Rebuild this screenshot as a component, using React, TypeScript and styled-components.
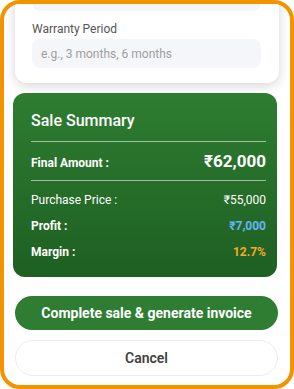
import React, { useLayoutEffect, useRef } from "react";
import styled, { createGlobalStyle } from "styled-components";

const GlobalStyle = createGlobalStyle`
  html, body {
    margin: 0;
    padding: 0;
    background: #fff;
  }
  * {
    box-sizing: border-box;
  }
`;

const Frame = styled.div`
  width: 294px;
  height: 389px;
  border: 4px solid #f29400;
  border-radius: 20px;
  overflow: hidden;
  background: #fff;
  display: flex;
  flex-direction: column;
  font-family: Roboto, "Noto Sans", "DejaVu Sans", sans-serif;
`;

const ScrollBody = styled.div`
  flex: 1;
  min-height: 0;
  overflow-y: auto;
  scrollbar-width: none;
  display: flex;
  flex-direction: column;
  gap: 10px;
  padding-top: 16px;

  &::-webkit-scrollbar {
    display: none;
  }
`;

const FormCard = styled.div`
  margin: 0 11px;
  background: #fff;
  border-radius: 12px;
  padding: 16px 18px 15px 17px;
  box-shadow: 0 3px 12px rgba(0, 0, 0, 0.16);
  display: flex;
  flex-direction: column;
  gap: 10px;
`;

const Field = styled.div`
  display: flex;
  flex-direction: column;
  gap: 2px;
`;

const Label = styled.label`
  font-size: 12px;
  line-height: 16px;
  color: #555;
`;

const Input = styled.input`
  height: 29px;
  border: none;
  outline: none;
  border-radius: 8px;
  background: #f5f6fa;
  padding: 0 9px;
  font-family: inherit;
  font-size: 12px;
  color: #333;

  &::placeholder {
    color: #9e9e9e;
  }
`;

const SummaryCard = styled.div`
  margin: 0 13px 0 9px;
  border-radius: 12px;
  background: linear-gradient(180deg, #2e7d32 0%, #1e5f22 100%);
  padding: 18px 11px 17px 18px;
  color: #fff;
  flex-shrink: 0;
`;

const SummaryTitle = styled.div`
  font-size: 16px;
  line-height: 20px;
  font-weight: 500;
  margin-bottom: 10px;
`;

const Divider = styled.div`
  height: 1px;
  background: rgba(255, 255, 255, 0.55);
`;

const TotalRow = styled.div`
  display: flex;
  justify-content: space-between;
  align-items: baseline;
  padding: 8px 0;
  height: 38px;
`;

const TotalLabel = styled.span`
  font-size: 12px;
  font-weight: 700;
`;

const TotalValue = styled.span`
  font-size: 17px;
  line-height: 22px;
  font-weight: 700;
`;

const Rows = styled.div`
  display: flex;
  flex-direction: column;
  gap: 10px;
  padding-top: 11px;
`;

const Row = styled.div<{ $bold?: boolean }>`
  display: flex;
  justify-content: space-between;
  font-size: 12px;
  line-height: 16px;
  font-weight: ${({ $bold }) => ($bold ? 700 : 400)};
`;

const Value = styled.span<{ $color?: string }>`
  color: ${({ $color }) => $color || "#fff"};
`;

const Footer = styled.div`
  flex-shrink: 0;
  display: flex;
  flex-direction: column;
  gap: 10px;
  padding: 19px 12px 9px 11px;
`;

const PrimaryButton = styled.button`
  height: 34px;
  border: none;
  border-radius: 17px;
  background: #2e7d32;
  color: #fff;
  font-family: inherit;
  font-size: 14px;
  font-weight: 700;
  cursor: pointer;
`;

const GhostButton = styled.button`
  height: 36px;
  border: 1px solid #ececec;
  border-radius: 18px;
  background: #fff;
  color: #424242;
  font-family: inherit;
  font-size: 14px;
  font-weight: 600;
  cursor: pointer;
`;

const fields = [
  { label: "Customer Name", placeholder: "Enter customer name" },
  { label: "Phone Number", placeholder: "Enter phone number" },
  { label: "IMEI / Serial Number", placeholder: "Enter IMEI or serial number" },
  { label: "Warranty Period", placeholder: "e.g., 3 months, 6 months" },
];

const App: React.FC = () => {
  const bodyRef = useRef<HTMLDivElement>(null);

  // modal is shown scrolled down to the summary
  useLayoutEffect(() => {
    if (bodyRef.current) {
      bodyRef.current.scrollTop = bodyRef.current.scrollHeight;
    }
  }, []);

  return (
    <>
      <GlobalStyle />
      <Frame>
        <ScrollBody ref={bodyRef}>
          <FormCard>
            {fields.map((f) => (
              <Field key={f.label}>
                <Label>{f.label}</Label>
                <Input placeholder={f.placeholder} />
              </Field>
            ))}
          </FormCard>

          <SummaryCard>
            <SummaryTitle>Sale Summary</SummaryTitle>
            <Divider />
            <TotalRow>
              <TotalLabel>Final Amount :</TotalLabel>
              <TotalValue>₹62,000</TotalValue>
            </TotalRow>
            <Divider />
            <Rows>
              <Row>
                <span>Purchase Price :</span>
                <Value>₹55,000</Value>
              </Row>
              <Row $bold>
                <span>Profit :</span>
                <Value $color="#64b5f6">₹7,000</Value>
              </Row>
              <Row $bold>
                <span>Margin :</span>
                <Value $color="#f9a825">12.7%</Value>
              </Row>
            </Rows>
          </SummaryCard>
        </ScrollBody>

        <Footer>
          <PrimaryButton>Complete sale &amp; generate invoice</PrimaryButton>
          <GhostButton>Cancel</GhostButton>
        </Footer>
      </Frame>
    </>
  );
};

export default App;
